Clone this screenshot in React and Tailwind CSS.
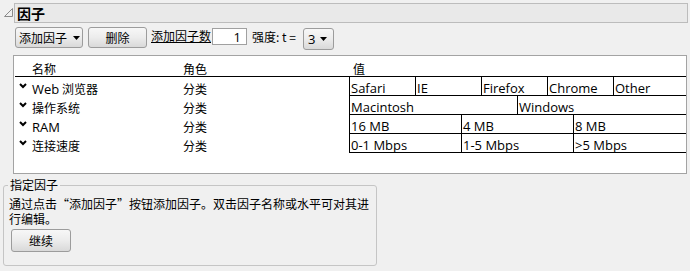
import React from "react";

const cjk = "font-['Noto_Sans_CJK_SC',sans-serif]";
const latin = "font-['Open_Sans','Noto_Sans_CJK_SC',sans-serif]";
const btn =
  "flex items-center rounded-[3px] border border-[#9c9c9c] bg-linear-to-b from-[#f7f7f7] via-[#ececec] to-[#d9d9d9] text-[12px] leading-[14px] text-black";

// small filled arrow used on the dropdown buttons
const Caret = () => (
  <svg width="7" height="4" viewBox="0 0 7 4" className="shrink-0">
    <path d="M0 0h7L3.5 4z" fill="#000" />
  </svg>
);

const Chevron = () => (
  <svg width="8" height="6" viewBox="0 0 8 6" className="shrink-0">
    <path d="M1 1l3 3 3-3" fill="none" stroke="#000" strokeWidth="2" />
  </svg>
);

const factors = [
  {
    name: (
      <>
        <span className={`${latin} text-[13px]`}>Web</span> 浏览器
      </>
    ),
    levels: [
      { label: "Safari", w: "w-[66px]" },
      { label: "IE", w: "w-[66px]" },
      { label: "Firefox", w: "w-[66px]" },
      { label: "Chrome", w: "w-[66px]" },
      { label: "Other", w: "flex-1" },
    ],
  },
  {
    name: "操作系统",
    levels: [
      { label: "Macintosh", w: "w-[168px]" },
      { label: "Windows", w: "flex-1" },
    ],
  },
  {
    name: <span className={`${latin} text-[13px]`}>RAM</span>,
    levels: [
      { label: "16 MB", w: "w-[112px]" },
      { label: "4 MB", w: "w-[112px]" },
      { label: "8 MB", w: "flex-1" },
    ],
  },
  {
    name: "连接速度",
    levels: [
      { label: "0-1 Mbps", w: "w-[112px]" },
      { label: "1-5 Mbps", w: "w-[112px]" },
      { label: ">5 Mbps", w: "flex-1" },
    ],
  },
];

const FactorRow = ({ factor }) => (
  <div className="flex h-[19px]">
    <div className="flex w-[168px] items-start pl-[4px] pt-[5px] text-[12px] leading-[14px]">
      <span className="mt-[1px]">
        <Chevron />
      </span>
      <span className="ml-[5px]">{factor.name}</span>
    </div>
    <div className="w-[166px] pt-[5px] text-[12px] leading-[14px]">分类</div>
    <div className="flex flex-1 border-b border-black">
      {factor.levels.map((lv) => (
        <div
          key={lv.label}
          className={`${lv.w} border-l border-black pl-[1px] pt-[3px] text-[13px] leading-[16px] ${latin}`}
        >
          {lv.label}
        </div>
      ))}
    </div>
  </div>
);

export default function App() {
  return (
    <div lang="zh-CN" className={`h-[271px] w-[690px] overflow-hidden bg-[#f0f0f0] text-black ${cjk}`}>
      {/* title bar */}
      <div className="flex items-start pl-[4px] pr-[2px] pt-[3px]">
        <svg width="9" height="9" viewBox="0 0 9 9" className="mt-[5px] shrink-0">
          <path d="M0.5 8.5L8.5 0.5V8.5Z" fill="none" stroke="#8a8a8a" />
        </svg>
        <div className="ml-[1px] flex h-[20px] flex-1 items-center border border-[#bcbcbc] bg-[#e9e9e9] pl-[2px] text-[14px] font-bold leading-[16px]">
          因子
        </div>
      </div>

      {/* toolbar */}
      <div className="mt-[4px] flex h-[23px] items-start pl-[15px] text-[12px] leading-[14px]">
        <button className={`${btn} h-[21px] w-[68px] gap-[6px] pl-[3px]`}>
          添加因子
          <Caret />
        </button>
        <button className={`${btn} ml-[5px] h-[21px] w-[59px] justify-center`}>删除</button>
        <span className="ml-[4px] mt-[3px] border-b border-black leading-[12px]">添加因子数</span>
        <div className={`ml-[1px] mt-[1px] flex h-[17px] w-[35px] items-center justify-end border border-[#a0a0a0] bg-white pr-[5px] text-[13px] ${latin}`}>
          1
        </div>
        <span className="ml-[5px] mt-[3px]">强度: t =</span>
        <button className={`${btn} ml-[7px] mt-[1px] h-[22px] w-[31px] gap-[5px] pl-[4px]`}>
          <span className={`${latin} text-[13px]`}>3</span>
          <Caret />
        </button>
      </div>

      {/* factor table */}
      <div className="ml-[13px] mt-[5px] h-[119px] w-[674px] border border-[#a3a3a3] bg-white">
        <div className="ml-[1px]">
          <div className="flex h-[21px] border-b border-black text-[12px] leading-[14px]">
            <div className="w-[168px] pl-[17px] pt-[6px]">名称</div>
            <div className="w-[166px] pt-[6px]">角色</div>
            <div className="flex-1 pl-[4px] pt-[6px]">值</div>
          </div>
          {factors.map((f, i) => (
            <FactorRow key={i} factor={f} />
          ))}
        </div>
      </div>

      {/* specify factors */}
      <fieldset className="ml-[3px] mt-[4px] w-[374px] rounded-[3px] border border-[#c5c5c5] px-[5px] pb-[13px] text-[12px] leading-[14px]">
        <legend className="-ml-[1px] px-[2px]">指定因子</legend>
        <p className="pt-[4px] leading-[15px]">
          通过点击“添加因子”按钮添加因子。双击因子名称或水平可对其进
          <br />
          行编辑。
        </p>
        <button className={`${btn} ml-[2px] mt-[3px] h-[23px] w-[60px] justify-center`}>继续</button>
      </fieldset>
    </div>
  );
}
